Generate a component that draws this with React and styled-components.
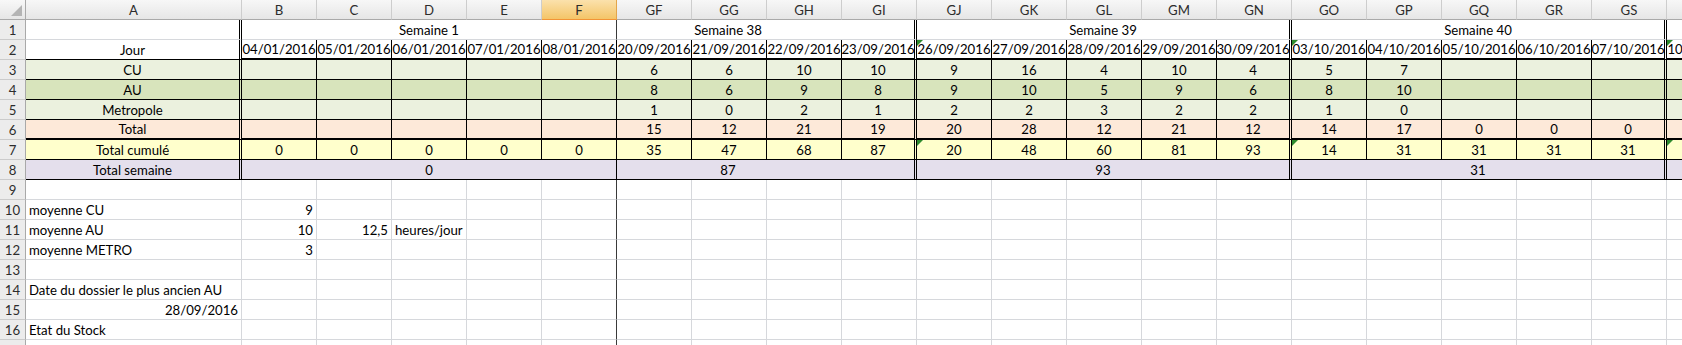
import React from 'react';
import styled, { createGlobalStyle, css } from 'styled-components';

const GlobalStyle = createGlobalStyle`
  html, body { margin: 0; padding: 0; background: #ffffff; overflow: hidden; }
  body { font-family: Lato, "Open Sans", sans-serif; }
`;

const EDGE = {
  none: 'none',
  grid: '1px solid #d6d8dc',
  thin: '1px solid #000000',
  double: '3px double #000000',
  freeze: '1px solid #3a3a3a',
  thick: '2px solid #000000',
};

const FILL = {
  white: '#ffffff',
  cu: '#ebf1de',
  au: '#d8e4bc',
  metro: '#ebf1de',
  total: '#fde9d9',
  cum: '#ffffcc',
  week: '#e4dfec',
};

const JUSTIFY = { left: 'flex-start', right: 'flex-end', center: 'center' };

const Sheet = styled.div`
  display: grid;
  grid-template-columns: 26px 216px repeat(20, 75px);
  grid-auto-rows: 20px;
  width: 1682px;
  height: 345px;
  overflow: hidden;
  font-size: 13.2px;
  color: #000;
`;

const Corner = styled.div`
  position: relative;
  box-sizing: border-box;
  background: linear-gradient(#f8f8f8, #e6e6e6);
  border-right: 1px solid #a9a9a9;
  border-bottom: 1px solid #a9a9a9;
  &::after {
    content: '';
    position: absolute;
    right: 3px;
    bottom: 3px;
    width: 0;
    height: 0;
    border-style: solid;
    border-width: 0 0 11px 11px;
    border-color: transparent transparent #b4b4b4 transparent;
  }
`;

const ColHead = styled.div`
  box-sizing: border-box;
  display: flex;
  align-items: center;
  justify-content: center;
  color: #2c2c2c;
  background: ${p => (p.$active ? 'linear-gradient(#fbe1ac, #f4c568)' : 'linear-gradient(#f7f7f7, #e6e6e6)')};
  border-right: 1px solid ${p => (p.$active ? '#e3a54a' : '#cdcdcd')};
  border-bottom: 1px solid ${p => (p.$active ? '#f29436' : '#a9a9a9')};
`;

const RowHead = styled.div`
  box-sizing: border-box;
  display: flex;
  align-items: flex-end;
  justify-content: center;
  padding-bottom: 1px;
  line-height: 16px;
  color: #2c2c2c;
  background: #ececec;
  border-right: 1px solid #a9a9a9;
  border-bottom: 1px solid #cbcbcb;
`;

const Cell = styled.div`
  position: relative;
  box-sizing: border-box;
  grid-column: span ${p => p.$span || 1};
  display: flex;
  align-items: flex-end;
  justify-content: ${p => JUSTIFY[p.$align || 'left']};
  padding: 0 ${p => (p.$shift ? 78 : 3)}px 1px 3px;
  background: ${p => FILL[p.$fill || 'white']};
  border-right: ${p => EDGE[p.$r || 'grid']};
  border-bottom: ${p => EDGE[p.$b || 'grid']};
  white-space: nowrap;
  line-height: 16px;
  ${p =>
    p.$flag &&
    css`
      &::before {
        content: '';
        position: absolute;
        left: 0;
        top: 0;
        width: 0;
        height: 0;
        border-top: 6px solid #2e8b2e;
        border-right: 6px solid transparent;
      }
    `}
`;

const COLS = ['B', 'C', 'D', 'E', 'F', 'GF', 'GG', 'GH', 'GI', 'GJ', 'GK', 'GL', 'GM', 'GN', 'GO', 'GP', 'GQ', 'GR', 'GS', 'GT'];

const WEEKS = [
  { span: 5, label: 'Semaine 1', total: '0', edge: 'freeze' },
  { span: 4, label: 'Semaine 38', total: '87', edge: 'double', shift: true },
  { span: 5, label: 'Semaine 39', total: '93', edge: 'double' },
  { span: 5, label: 'Semaine 40', total: '31', edge: 'double' },
  { span: 1, label: '', total: '', edge: 'thin' },
];

// right edge of each data column inside the table
const tableEdge = [];
WEEKS.forEach(w => {
  for (let i = 0; i < w.span; i++) tableEdge.push(i === w.span - 1 ? (w.edge === 'freeze' ? 'thin' : w.edge) : 'thin');
});

const DATES = [
  '04/01/2016', '05/01/2016', '06/01/2016', '07/01/2016', '08/01/2016',
  '20/09/2016', '21/09/2016', '22/09/2016', '23/09/2016',
  '26/09/2016', '27/09/2016', '28/09/2016', '29/09/2016', '30/09/2016',
  '03/10/2016', '04/10/2016', '05/10/2016', '06/10/2016', '07/10/2016',
  '10/10/2016',
];

const E5 = ['', '', '', '', ''];
const DATA_ROWS = [
  { label: 'CU', fill: 'cu', values: [...E5, 6, 6, 10, 10, 9, 16, 4, 10, 4, 5, 7, '', '', '', ''] },
  { label: 'AU', fill: 'au', values: [...E5, 8, 6, 9, 8, 9, 10, 5, 9, 6, 8, 10, '', '', '', ''] },
  { label: 'Metropole', fill: 'metro', values: [...E5, 1, 0, 2, 1, 2, 2, 3, 2, 2, 1, 0, '', '', '', ''] },
  { label: 'Total', fill: 'total', bottom: 'thick', values: [...E5, 15, 12, 21, 19, 20, 28, 12, 21, 12, 14, 17, 0, 0, 0, ''] },
  { label: 'Total cumulé', fill: 'cum', values: [0, 0, 0, 0, 0, 35, 47, 68, 87, 20, 48, 60, 81, 93, 14, 31, 31, 31, 31, ''], flags: [9, 14, 19] },
];

const NOTES = [
  { n: 9 },
  { n: 10, a: 'moyenne CU', b: '9' },
  { n: 11, a: 'moyenne AU', b: '10', c: '12,5', d: 'heures/jour' },
  { n: 12, a: 'moyenne METRO', b: '3' },
  { n: 13 },
  { n: 14, a: 'Date du dossier le plus ancien AU' },
  { n: 15, a: '28/09/2016', aRight: true },
  { n: 16, a: 'Etat du Stock' },
  { n: 17 },
];

function HeaderRow() {
  return (
    <>
      <Corner />
      <ColHead>A</ColHead>
      {COLS.map(c => (
        <ColHead key={c} $active={c === 'F'}>{c}</ColHead>
      ))}
    </>
  );
}

function WeekRow() {
  return (
    <>
      <RowHead>1</RowHead>
      <Cell $r="double" />
      {WEEKS.map((w, i) => (
        <Cell key={i} $span={w.span} $align="center" $r={w.edge} $shift={w.shift}>{w.label}</Cell>
      ))}
    </>
  );
}

function DateRow() {
  return (
    <>
      <RowHead>2</RowHead>
      <Cell $align="center" $r="double" $b="thin">Jour</Cell>
      {DATES.map((d, i) => (
        <Cell key={d} $align="center" $r={tableEdge[i]} $b="thick" $flag={i === 9 || i === 14 || i === 19}>{d}</Cell>
      ))}
    </>
  );
}

function DataRow({ n, row }) {
  const b = row.bottom || 'thin';
  return (
    <>
      <RowHead>{n}</RowHead>
      <Cell $align="center" $fill={row.fill} $r="double" $b={b}>{row.label}</Cell>
      {row.values.map((v, i) => (
        <Cell key={i} $align="center" $fill={row.fill} $r={tableEdge[i]} $b={b} $flag={row.flags && row.flags.includes(i)}>{v}</Cell>
      ))}
    </>
  );
}

function TotalWeekRow() {
  return (
    <>
      <RowHead>8</RowHead>
      <Cell $align="center" $fill="week" $r="double" $b="thin">Total semaine</Cell>
      {WEEKS.map((w, i) => (
        <Cell key={i} $span={w.span} $align="center" $fill="week" $r={w.edge === 'freeze' ? 'thin' : w.edge} $b="thin" $shift={w.shift}>{w.total}</Cell>
      ))}
    </>
  );
}

function NoteRow({ note }) {
  const extra = { 0: note.b, 1: note.c, 2: note.d };
  const align = { 0: 'right', 1: 'right', 2: 'left' };
  return (
    <>
      <RowHead>{note.n}</RowHead>
      <Cell $align={note.aRight ? 'right' : 'left'}>{note.a || ''}</Cell>
      {COLS.map((c, i) => (
        <Cell key={c} $align={align[i] || 'left'} $r={c === 'F' ? 'freeze' : 'grid'}>{extra[i] || ''}</Cell>
      ))}
    </>
  );
}

export default function App() {
  return (
    <>
      <GlobalStyle />
      <Sheet>
        <HeaderRow />
        <WeekRow />
        <DateRow />
        {DATA_ROWS.map((row, i) => (
          <DataRow key={row.label} n={i + 3} row={row} />
        ))}
        <TotalWeekRow />
        {NOTES.map(note => (
          <NoteRow key={note.n} note={note} />
        ))}
      </Sheet>
    </>
  );
}
